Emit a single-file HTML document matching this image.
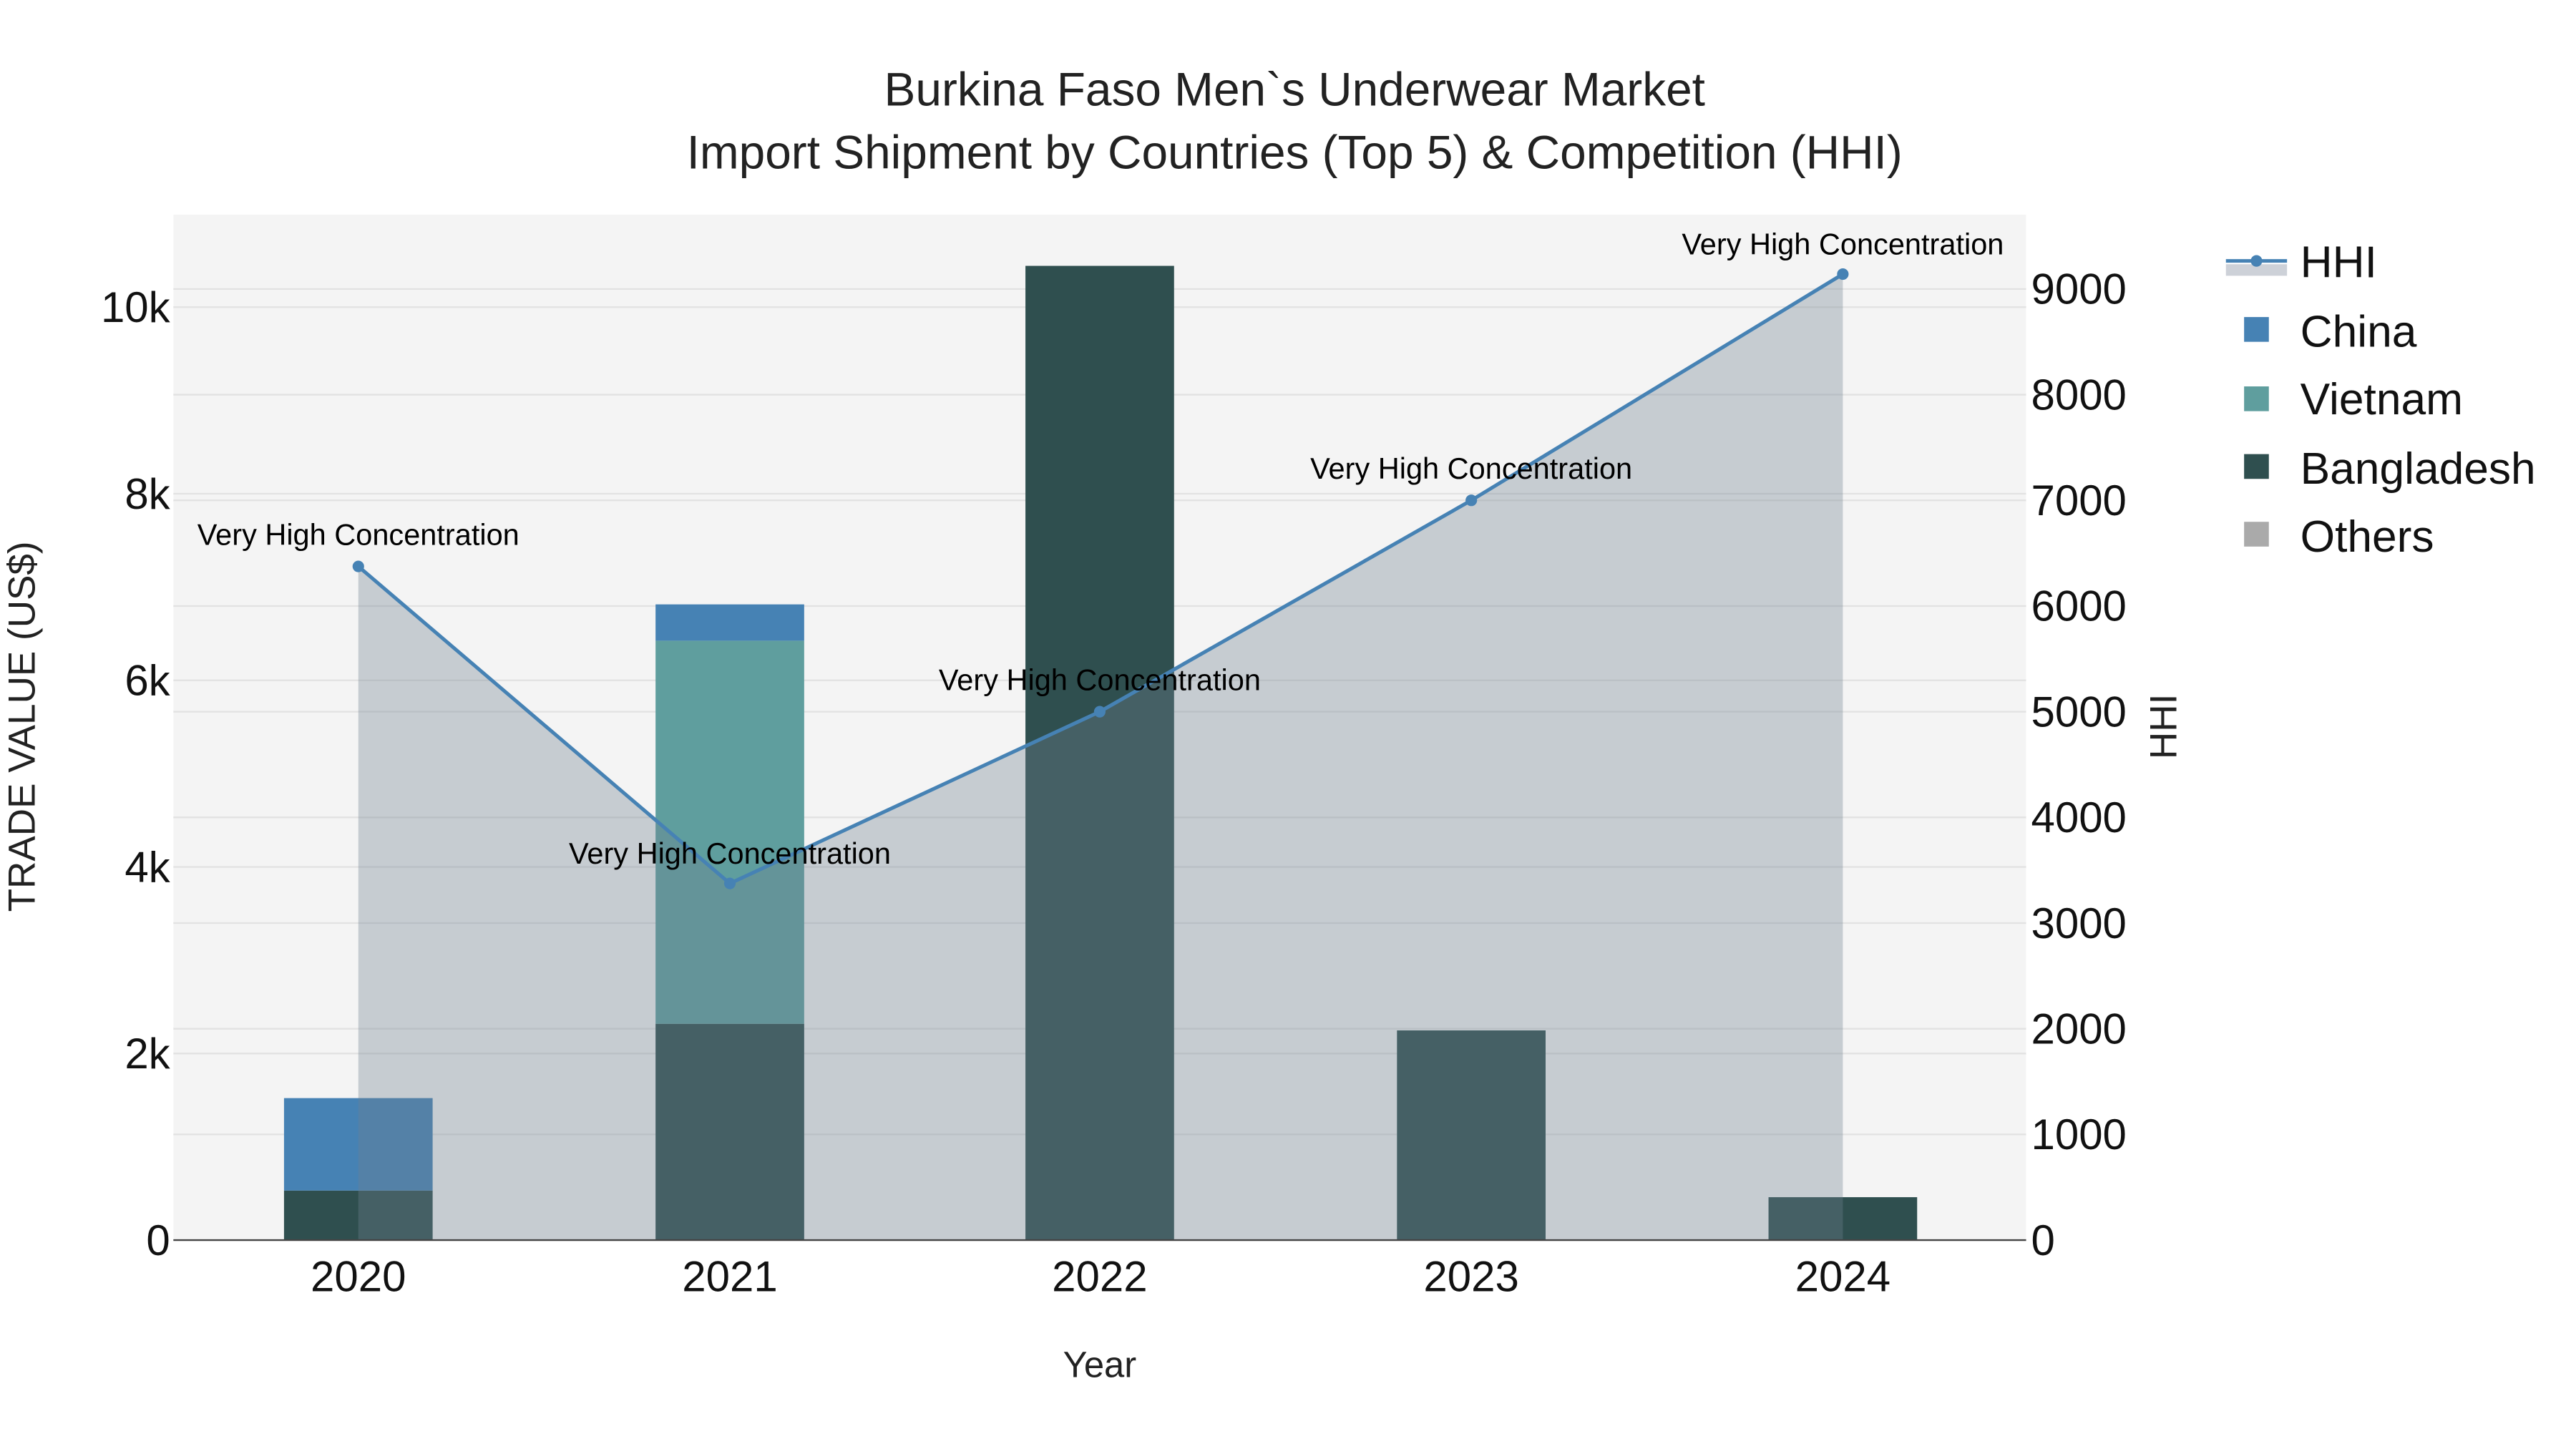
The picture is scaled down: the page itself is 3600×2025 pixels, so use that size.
<!DOCTYPE html>
<html><head><meta charset="utf-8"><style>html,body{margin:0;padding:0;background:#fff}svg{display:block}</style></head>
<body>
<svg width="3600" height="2025" viewBox="0 0 1560 877.5" xmlns="http://www.w3.org/2000/svg" font-family="Liberation Sans, Arial, sans-serif">
<rect width="1560" height="877.5" fill="#fff"/>
<rect x="105" y="130" width="1122" height="621" fill="#f4f4f4"/>
<g stroke="#e2e2e2" stroke-width="1">
<line x1="105" x2="1227" y1="638" y2="638"/><line x1="105" x2="1227" y1="525" y2="525"/><line x1="105" x2="1227" y1="412" y2="412"/><line x1="105" x2="1227" y1="299" y2="299"/><line x1="105" x2="1227" y1="186" y2="186"/>
<line x1="105" x2="1227" y1="687" y2="687"/><line x1="105" x2="1227" y1="623" y2="623"/><line x1="105" x2="1227" y1="559" y2="559"/><line x1="105" x2="1227" y1="495" y2="495"/><line x1="105" x2="1227" y1="431" y2="431"/><line x1="105" x2="1227" y1="367" y2="367"/><line x1="105" x2="1227" y1="303" y2="303"/><line x1="105" x2="1227" y1="239" y2="239"/><line x1="105" x2="1227" y1="175" y2="175"/>
</g>
<rect x="172" y="721" width="90" height="30" fill="#2f4f4f"/>
<rect x="172" y="665" width="90" height="56" fill="#4682b4"/>
<rect x="397" y="620" width="90" height="131" fill="#2f4f4f"/>
<rect x="397" y="388" width="90" height="232" fill="#5f9e9e"/>
<rect x="397" y="366" width="90" height="22" fill="#4682b4"/>
<rect x="621" y="161" width="90" height="590" fill="#2f4f4f"/>
<rect x="846" y="624" width="90" height="127" fill="#2f4f4f"/>
<rect x="1071" y="725" width="90" height="26" fill="#2f4f4f"/>
<path d="M217,751 L217,343 L442,535 L666,431 L891,303 L1116,166 L1116,751 Z" fill="rgba(112,128,144,0.35)"/>
<polyline points="217,343 442,535 666,431 891,303 1116,166" fill="none" stroke="#4682b4" stroke-width="2.2"/>
<g fill="#4682b4"><circle cx="217" cy="343" r="3.5"/><circle cx="442" cy="535" r="3.5"/><circle cx="666" cy="431" r="3.5"/><circle cx="891" cy="303" r="3.5"/><circle cx="1116" cy="166" r="3.5"/></g>
<line x1="105" x2="1227" y1="751" y2="751" stroke="#444" stroke-width="1"/>
<g font-size="18" fill="#000" text-anchor="middle">
<text x="217" y="330">Very High Concentration</text>
<text x="442" y="523">Very High Concentration</text>
<text x="666" y="418">Very High Concentration</text>
<text x="891" y="290">Very High Concentration</text>
<text x="1116" y="154">Very High Concentration</text>
</g>
<g font-size="26" fill="#111" text-anchor="end">
<text x="103" y="760">0</text><text x="103" y="647">2k</text><text x="103" y="534">4k</text><text x="103" y="421">6k</text><text x="103" y="308">8k</text><text x="103" y="195">10k</text>
</g>
<g font-size="26" fill="#111" text-anchor="start">
<text x="1230" y="760">0</text><text x="1230" y="696">1000</text><text x="1230" y="632">2000</text><text x="1230" y="568">3000</text><text x="1230" y="504">4000</text><text x="1230" y="440">5000</text><text x="1230" y="376">6000</text><text x="1230" y="312">7000</text><text x="1230" y="248">8000</text><text x="1230" y="184">9000</text>
</g>
<g font-size="26" fill="#111" text-anchor="middle">
<text x="217" y="782">2020</text><text x="442" y="782">2021</text><text x="666" y="782">2022</text><text x="891" y="782">2023</text><text x="1116" y="782">2024</text>
</g>
<text x="666" y="834" font-size="22" text-anchor="middle" fill="#222">Year</text>
<text transform="translate(21,440) rotate(-90)" font-size="23" text-anchor="middle" fill="#222">TRADE VALUE (US$)</text>
<text transform="translate(1318,440) rotate(-90)" font-size="23" text-anchor="middle" fill="#222">HHI</text>
<g font-size="28.5" fill="#222" text-anchor="middle">
<text x="784" y="64">Burkina Faso Men`s Underwear Market</text>
<text x="784" y="102">Import Shipment by Countries (Top 5) &amp; Competition (HHI)</text>
</g>
<rect x="1348" y="160" width="37" height="7" fill="#cdd1d8"/>
<line x1="1348" x2="1385" y1="158" y2="158" stroke="#4682b4" stroke-width="2.2"/>
<circle cx="1366.5" cy="158" r="3.5" fill="#4682b4"/>
<rect x="1359" y="192" width="15" height="15" fill="#4682b4"/>
<rect x="1359" y="234" width="15" height="15" fill="#5f9e9e"/>
<rect x="1359" y="275" width="15" height="15" fill="#2f4f4f"/>
<rect x="1359" y="316" width="15" height="15" fill="#aaaaaa"/>
<g font-size="27" fill="#111">
<text x="1393" y="168">HHI</text><text x="1393" y="210">China</text><text x="1393" y="251">Vietnam</text><text x="1393" y="293">Bangladesh</text><text x="1393" y="334">Others</text>
</g>
</svg>
</body></html>
